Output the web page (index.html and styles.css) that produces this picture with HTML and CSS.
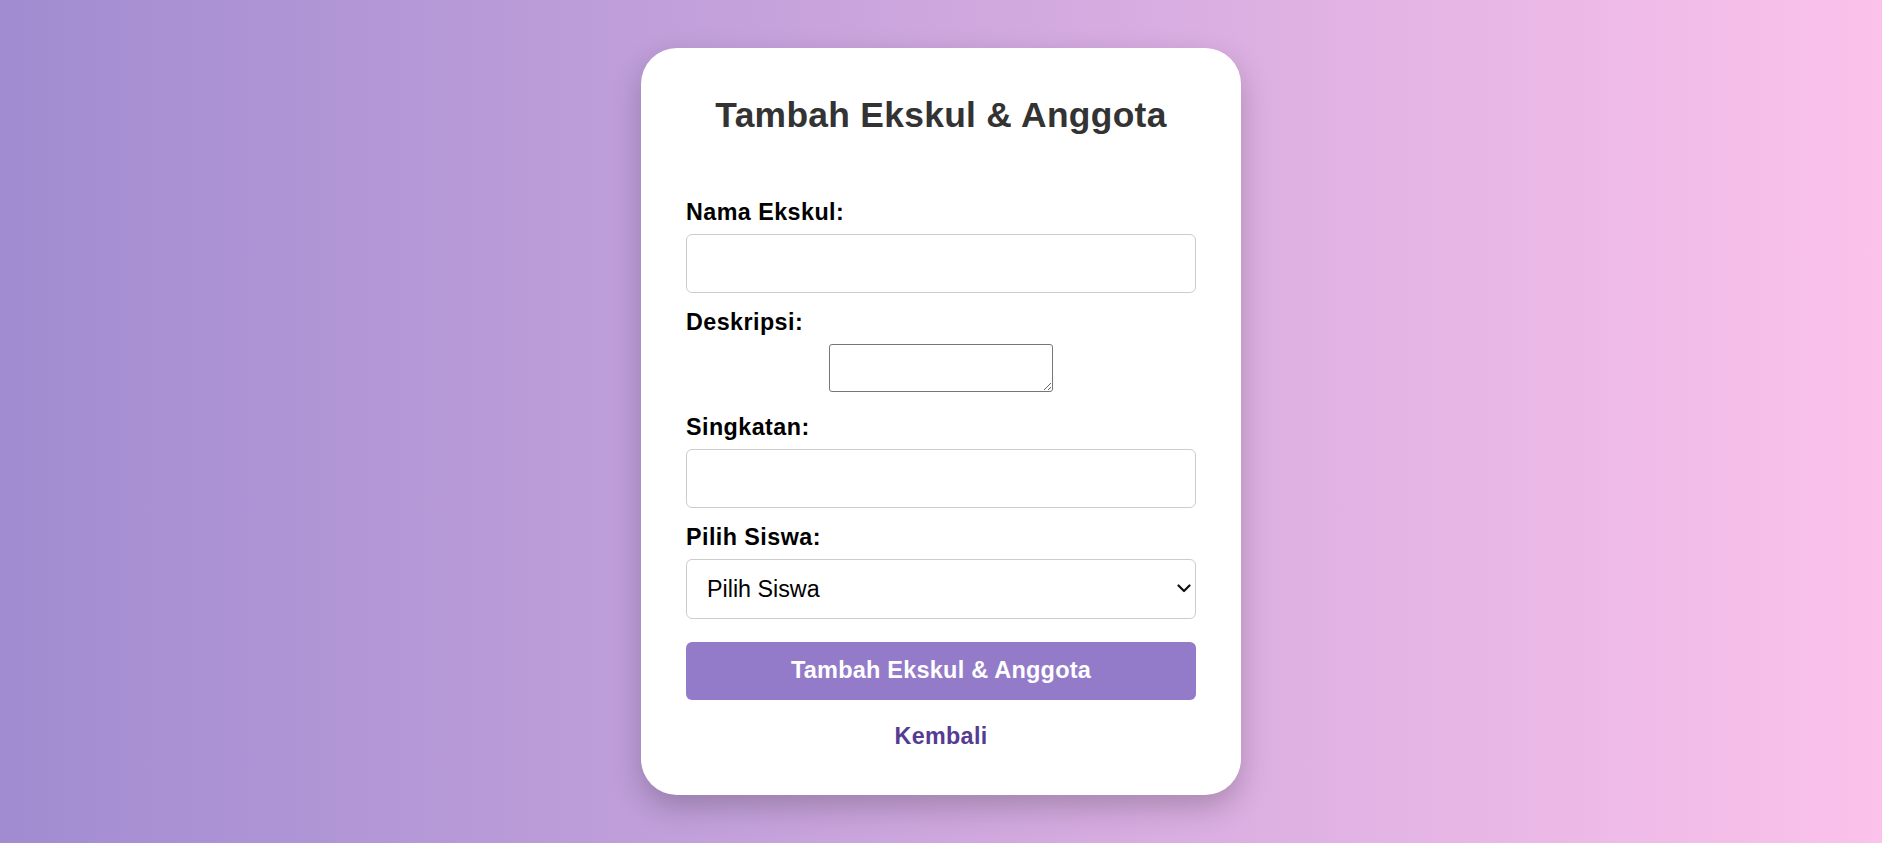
FILE: index.html
```html
<!DOCTYPE html>
<html lang="id">
<head>
<meta charset="utf-8">
<title>Tambah Ekskul &amp; Anggota</title>
<link rel="stylesheet" href="styles.css">
</head>
<body>
  <div class="card">
    <h2 class="title">Tambah Ekskul &amp; Anggota</h2>
    <form class="form">
      <label class="label" for="nama">Nama Ekskul:</label>
      <input class="field" id="nama" type="text">

      <label class="label" for="deskripsi">Deskripsi:</label>
      <textarea class="textarea" id="deskripsi"></textarea>

      <label class="label" for="singkatan">Singkatan:</label>
      <input class="field" id="singkatan" type="text">

      <label class="label" for="siswa">Pilih Siswa:</label>
      <div class="select-wrap">
        <select class="select" id="siswa">
          <option>Pilih Siswa</option>
        </select>
        <svg class="select-arrow" width="14" height="10" viewBox="0 0 14 10" aria-hidden="true">
          <path d="M1.5 2.5 L7 8 L12.5 2.5" fill="none" stroke="#111" stroke-width="2.2" stroke-linecap="round" stroke-linejoin="round"/>
        </svg>
      </div>

      <button class="btn" type="button">Tambah Ekskul &amp; Anggota</button>
    </form>
    <a class="back" href="#">Kembali</a>
  </div>
</body>
</html>
```
FILE: styles.css
```css
html, body {
  margin: 0;
  padding: 0;
}

body {
  height: 100vh;
  display: flex;
  align-items: center;
  justify-content: center;
  background: linear-gradient(to right, #a18cd1, #fbc2eb);
  font-family: "Liberation Sans", Arial, sans-serif;
}

.card {
  box-sizing: border-box;
  width: 600px;
  padding: 45px;
  background: #fff;
  border-radius: 36px;
  box-shadow: 0 12px 30px rgba(0, 0, 0, 0.22);
  display: flex;
  flex-direction: column;
}

.title {
  margin: 2px 0 62.5px;
  font-size: 35.4px;
  font-weight: bold;
  color: #333;
  text-align: center;
  line-height: normal;
  letter-spacing: 0.3px;
}

.form {
  display: flex;
  flex-direction: column;
  margin: 0;
}

.label {
  display: block;
  font-size: 23.3px;
  font-weight: bold;
  color: #000;
  line-height: normal;
  margin-bottom: 8px;
  letter-spacing: 0.45px;
}

.field {
  box-sizing: border-box;
  height: 59px;
  width: 100%;
  margin: 0 0 16.5px;
  padding: 0 20px;
  border: 1px solid #ccc;
  border-radius: 6px;
  font-family: inherit;
  font-size: 23.3px;
  background: #fff;
}

.textarea {
  box-sizing: border-box;
  display: block;
  width: 224px;
  height: 47.5px;
  margin: 0 auto 21.8px;
  border: 1px solid #767676;
  border-radius: 3px;
  padding: 2px;
  font-family: "Liberation Mono", monospace;
  font-size: 16px;
}

.select-wrap {
  position: relative;
  margin-bottom: 23.4px;
}

.select {
  box-sizing: border-box;
  display: block;
  width: 100%;
  height: 59.6px;
  padding: 0 40px 0 20px;
  border: 1px solid #ccc;
  border-radius: 6px;
  background: #fff;
  color: #000;
  font-family: inherit;
  font-size: 23.3px;
  -webkit-appearance: none;
  appearance: none;
}

.select-arrow {
  position: absolute;
  right: 5px;
  top: 24px;
  pointer-events: none;
}

.btn {
  box-sizing: border-box;
  width: 100%;
  height: 57.6px;
  margin: 0 0 23.2px;
  border: none;
  border-radius: 6px;
  background: #937bc9;
  color: #fff;
  font-family: inherit;
  font-size: 23.5px;
  font-weight: bold;
  letter-spacing: 0.22px;
  cursor: pointer;
}

.back {
  align-self: center;
  font-size: 23.3px;
  font-weight: bold;
  color: #553b91;
  text-decoration: none;
  line-height: normal;
  letter-spacing: 0.35px;
}
```
